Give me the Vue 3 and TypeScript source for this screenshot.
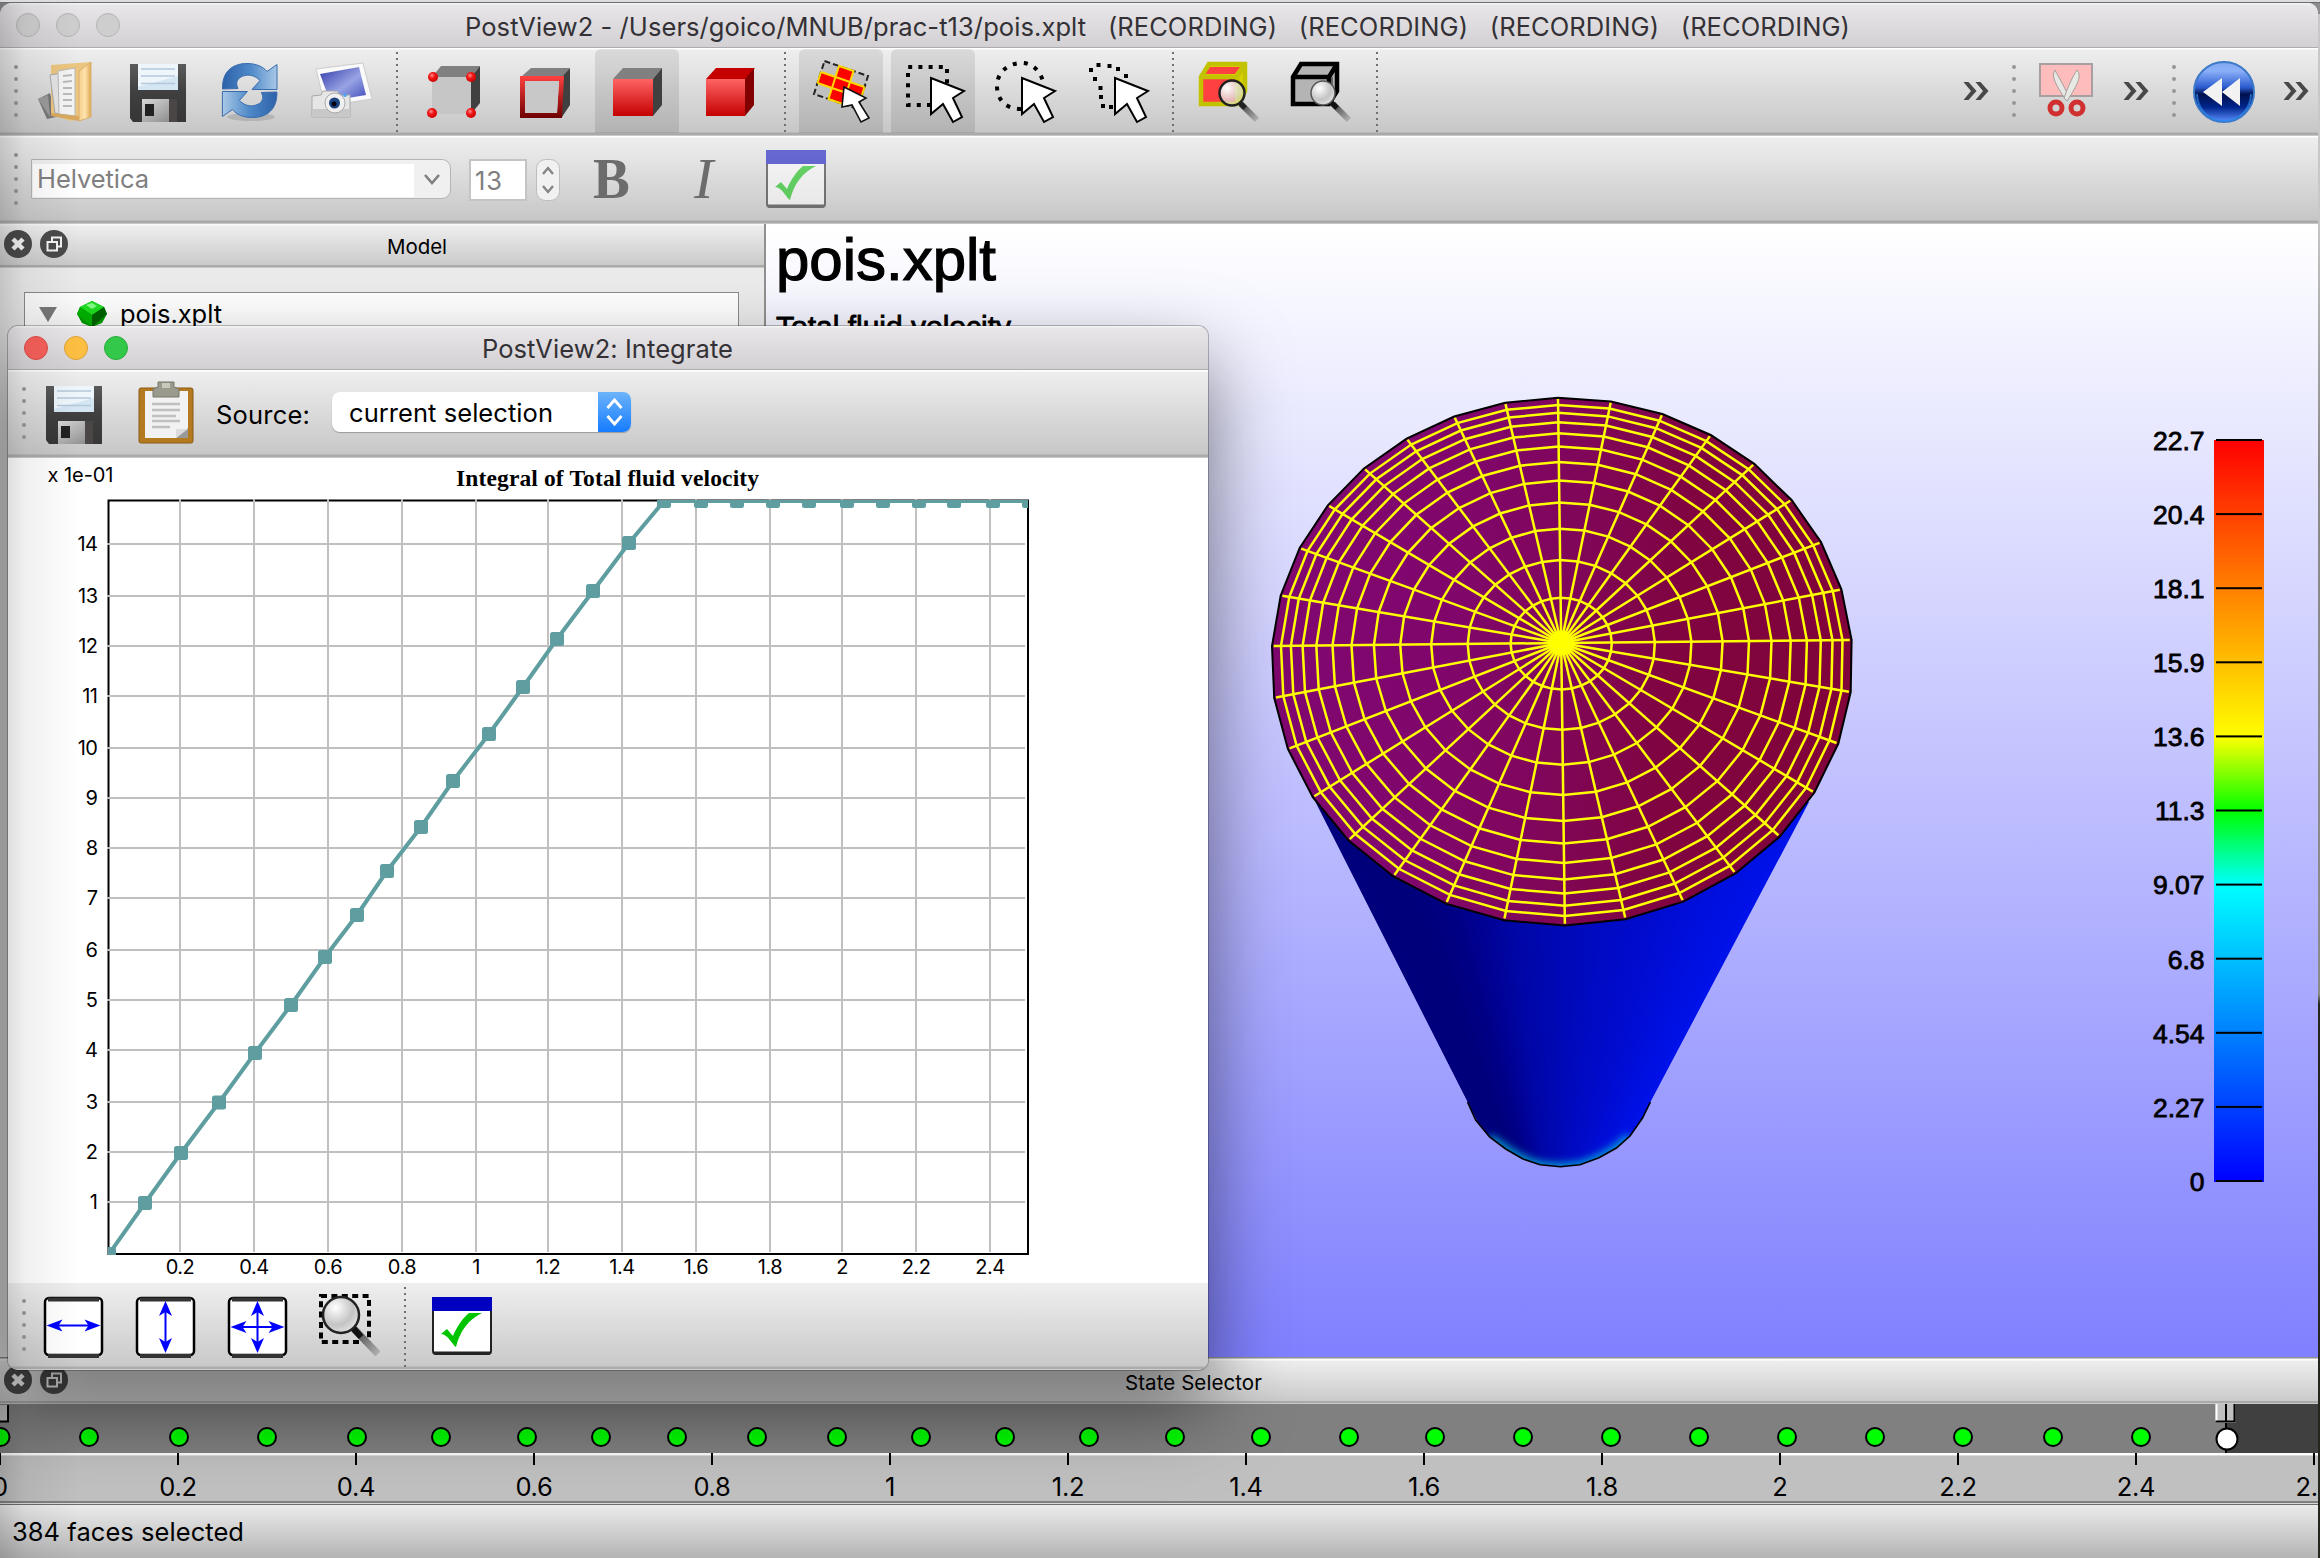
<script setup lang="ts">
type Pt = [number, number]

// Spreads or tightens the letters of an element until it has the given width
const vFit = {
  mounted(el: HTMLElement, binding: { value: number }) {
    const n = (el.textContent ?? '').length
    const w = el.getBoundingClientRect().width
    el.style.letterSpacing = `${((binding.value - w) / n).toFixed(3)}px`
  },
}

const nb = '\u00a0\u00a0 '
const title = 'PostView2 - /Users/goico/MNUB/prac-t13/pois.xplt' + (nb + '(RECORDING)').repeat(4)

// ---- chart ----
const gridX = [180, 254, 328, 402, 476, 548, 622, 696, 770, 842, 916, 990]
const gridY = [544, 596, 646, 696, 748, 798, 848, 898, 950, 1000, 1050, 1102, 1152, 1202]
const xLabels = ['0.2', '0.4', '0.6', '0.8', '1', '1.2', '1.4', '1.6', '1.8', '2', '2.2', '2.4']
const samples: Pt[] = [
  [109, 1254], [145, 1203], [181, 1153], [219, 1102.500], [255, 1053], [291, 1005], [325, 957], [357, 915],
  [387, 871], [421, 827], [453, 781], [489, 734], [523, 687], [557, 639], [593, 591], [629, 543],
  [664, 501], [701, 501], [737, 501], [773, 501], [809, 501], [847, 501], [883, 501], [919, 501],
  [954, 501], [993, 501], [1029, 501],
]
const curve = samples.map((p) => p.join(',')).join(' ')

// ---- disc mesh: 32 sectors, 12 rings, seen in perspective ----
const project = (r: number, k: number): Pt => {
  const a = (k * Math.PI) / 16
  const c = r * Math.cos(a)
  const s = r * Math.sin(a)
  const w = 1 - 0.002 * c + 0.0706 * s
  return [(1561.2 + 286.1 * c + 106.8 * s) / w, (643 - 4.3 * c - 216.7 * s) / w]
}
const ringOf = (r: number) =>
  Array.from({ length: 32 }, (_, k) => project(r, k).map((v) => v.toFixed(1)).join(',')).join(' ')
const radii = Array.from({ length: 11 }, (_, i) => (1 - 0.85 ** (i + 1)) / (1 - 0.85 ** 12))
const rings = radii.map(ringOf)
const rim = ringOf(1.002)
const spokes = Array.from({ length: 32 }, (_, k) => project(0.996, k))

// ---- pipe wall, shaded in slices that run to its vanishing point ----
const ramp: [number, number, number][] = [
  [0, 0, 124], [0.12, 0, 122], [0.22, 0, 134], [0.37, 6, 166], [0.57, 10, 190], [0.75, 12, 208], [1, 18, 234],
]
const slices = Array.from({ length: 90 }, (_, i) => {
  const t = i / 89
  let j = 1
  while (ramp[j][0] < t) j++
  const [a, b] = [ramp[j - 1], ramp[j]]
  const f = (t - a[0]) / (b[0] - a[0])
  const edge = (u: number): Pt[] => [
    [1315 + 494 * u - (152.5 - 311 * u) * 0.3, 713],
    [1467.5 + 183 * u + (152.5 - 311 * u) * 0.25, 1177],
  ]
  const l = edge(i / 90)
  const r = edge((i + 1.6) / 90)
  return {
    points: [l[0], r[0], r[1], l[1]].map((p) => p.join(',')).join(' '),
    fill: `rgb(0,${Math.round(a[1] + f * (b[1] - a[1]))},${Math.round(a[2] + f * (b[2] - a[2]))})`,
  }
})
const endArc =
  '1467.5,1102 1475.7,1120 1489.6,1137 1505.7,1149 1523,1159 1540,1164.7 1560.4,1166.7 1580,1164.7 1599,1157.7 1616.4,1148 1630,1136 1642.5,1118 1650.4,1102'

const legend = ['22.7', '20.4', '18.1', '15.9', '13.6', '11.3', '9.07', '6.8', '4.54', '2.27', '0']

// ---- time line ----
const states = [
  0.5, 89, 179, 267, 357, 441, 527, 601, 677, 757, 837, 921, 1005, 1089, 1175, 1261, 1349, 1435, 1523, 1611, 1699,
  1787, 1875, 1963, 2053, 2141,
]
const ticks = ['0', '0.2', '0.4', '0.6', '0.8', '1', '1.2', '1.4', '1.6', '1.8', '2', '2.2', '2.4', '2.6']

type Tool = { id: string; on?: boolean }
const tools: Tool[][] = [
  [{ id: 'open' }, { id: 'save' }, { id: 'refresh' }, { id: 'photo' }],
  [{ id: 'nodes' }, { id: 'edges' }, { id: 'faces', on: true }, { id: 'solid' }],
  [{ id: 'pick', on: true }, { id: 'rect', on: true }, { id: 'circle' }, { id: 'lasso' }],
  [{ id: 'zoomsel' }, { id: 'zoomall' }],
]
</script>

<template>
  <div class="screen">
    <svg class="defs" width="0" height="0">
      <defs>
        <linearGradient id="gRed" x1="0" y1="0" x2="0" y2="1"><stop offset="0" stop-color="#ff6464" /><stop offset="1" stop-color="#c40000" /></linearGradient>
        <linearGradient id="gFrame" x1="0" y1="0" x2="0" y2="1"><stop offset="0" stop-color="#ff4040" /><stop offset="1" stop-color="#6e0000" /></linearGradient>
        <linearGradient id="gBlue" x1="0" y1="0" x2="1" y2="0"><stop offset="0" stop-color="#2d62a8" /><stop offset=".5" stop-color="#4d88c8" /><stop offset="1" stop-color="#a8c8e6" /></linearGradient>
        <linearGradient id="gScreen" x1="0" y1="0" x2="1" y2="1"><stop offset="0" stop-color="#3038a8" /><stop offset=".55" stop-color="#98a4e4" /><stop offset="1" stop-color="#3c48b8" /></linearGradient>
        <linearGradient id="gMetal" x1="0" y1="0" x2="1" y2="1"><stop offset="0" stop-color="#d8d8d8" /><stop offset="1" stop-color="#858585" /></linearGradient>
        <linearGradient id="gFolder" x1="0" y1="0" x2="1" y2="0"><stop offset="0" stop-color="#f4cf8c" /><stop offset=".5" stop-color="#ffe2ac" /><stop offset="1" stop-color="#dba850" /></linearGradient>
        <linearGradient id="gBody" x1="0" y1="0" x2="0" y2="1"><stop offset="0" stop-color="#5a5a5a" /><stop offset=".5" stop-color="#3f3f3f" /><stop offset="1" stop-color="#383636" /></linearGradient>
        <linearGradient id="gHandle" x1="0" y1="0" x2="1" y2="1"><stop offset="0" stop-color="#333" /><stop offset=".4" stop-color="#707070" /><stop offset="1" stop-color="#b0b0b0" /></linearGradient>
        <radialGradient id="gLens" cx=".35" cy=".3" r=".8"><stop offset="0" stop-color="#fff" /><stop offset=".6" stop-color="#c4c4c4" /><stop offset="1" stop-color="#e8e8e8" /></radialGradient>
        <radialGradient id="gLensClear" cx=".3" cy=".3" r=".9"><stop offset="0" stop-color="#fff" /><stop offset=".6" stop-color="#ddd" stop-opacity=".75" /><stop offset="1" stop-color="#fff" stop-opacity=".15" /></radialGradient>
        <radialGradient id="gBall" cx=".4" cy=".35" r=".7"><stop offset="0" stop-color="#ff9090" /><stop offset=".4" stop-color="#f01818" /><stop offset="1" stop-color="#c00" /></radialGradient>
        <linearGradient id="gRew" x1="0" y1="0" x2="0" y2="1"><stop offset="0" stop-color="#7fa8f0" /><stop offset=".15" stop-color="#8ab0f8" /><stop offset=".42" stop-color="#2c5cd0" /><stop offset=".54" stop-color="#00104c" /><stop offset=".75" stop-color="#00248c" /><stop offset="1" stop-color="#5c90ff" /></linearGradient>
        <g id="floppy">
          <path d="M15 15h56v58H18l-3-4z" fill="url(#gBody)" />
          <path d="M23 15h40v26H23z" fill="#d4e6f2" /><path d="M23 15h40v12L23 38z" fill="#eef6fb" />
          <path d="M26 20h34M26 27h34M26 34.500h34" stroke="#b4c8dc" stroke-width="1.600" />
          <path d="M27 50h35v23H27z" fill="url(#gMetal)" /><path d="M54 50h8v23h-8z" fill="#4a4646" />
          <path d="M30 55h9v12h-9z" fill="#222" />
        </g>
        <path id="pointer" d="M40 29L73 42L62 49L71 68L62 73L52 55L40 65Z" fill="#fff" stroke="#000" stroke-width="2" stroke-linejoin="miter" />
        <path id="chevrons" d="M1.500 1h5l8 9-8 9h-5l7.500-9zM13.500 1h5l8 9-8 9h-5l7.500-9z" />
        <g id="check">
          <path d="M13 14h58v53a3 3 0 0 1-3 3H16a3 3 0 0 1-3-3z" fill="#fff" stroke="#222" stroke-width="2" />
          <path d="M12 13h60v14H12z" fill="#0000c0" />
          <path d="M14 69h56" stroke="#222" stroke-width="3" />
          <path d="M21 50l6-5 6 7c4-10 10-18 16-23h13c-14 7-22 18-26 34-3-1-8-13-15-13z" fill="#00c400" />
        </g>
        <g id="xbtn">
          <circle cx="14" cy="14" r="14" fill="#4a4a4a" /><path d="M9 9l10 10M19 9L9 19" stroke="#f4f4f4" stroke-width="4.500" />
        </g>
        <g id="floatbtn">
          <circle cx="14" cy="14" r="14" fill="#4a4a4a" /><path d="M12 11V7.500h9v9h-3M7.500 12h9.500v8.500H7.500z" fill="none" stroke="#f4f4f4" stroke-width="2" />
        </g>
      </defs>
    </svg>

    <div class="backdrop-line"></div>

    <div class="main">
      <header class="titlebar">
        <div class="lights off"><i></i><i></i><i></i></div>
        <span class="caption" v-fit="1385">{{ title }}</span>
      </header>

      <!-- main tool bar -->
      <div class="toolbar">
        <div class="grip"><i v-for="n in 5" :key="n"></i></div>
        <template v-for="(group, gi) in tools" :key="gi">
          <div v-for="tool in group" :key="tool.id" class="tool" :class="{ on: tool.on }">
            <svg viewBox="0 0 84 84" width="84" height="84">
              <g v-if="tool.id === 'open'">
                <path d="M15 50l12-6 6 24-9 2z" fill="#777" /><path d="M15 50l10-4 2 22z" fill="#9a9a9a" />
                <path d="M28 16l40-3v7l-12 4v46l-8 2-20-6z" fill="#ecc680" />
                <path d="M27 26l12-2 4 42-11-2z" fill="#e4e4e4" stroke="#aaa" />
                <path d="M35 22l17-3v48l-16-2z" fill="#f4f4f4" stroke="#b8b8b8" />
                <path d="M40 27l9-1M40 33l9-1M40 39h9M40 45h9M40 51h9M40 57h9" stroke="#bbb" stroke-width="2" />
                <path d="M56 22l12-9v55l-12 4z" fill="url(#gFolder)" stroke="#d8b070" />
                <path d="M28 64l28 3v5l-28-5z" fill="#d8aa60" />
              </g>
              <use v-else-if="tool.id === 'save'" href="#floppy" />
              <g v-else-if="tool.id === 'refresh'">
                <ellipse cx="44" cy="68" rx="24" ry="4" fill="#999" opacity=".5" />
                <path d="M15.500 40C15 22 26 14.500 40 14.500c9 0 16 3 20 8l10-7v25H45l8-9c-6-6-13-7-20-3-4 3-4 7-2 11z" fill="url(#gBlue)" stroke="#3a6cae" />
                <path d="M15.500 40C15 22 26 14.500 40 14.500c9 0 16 3 20 8l10-7v25H45l8-9c-6-6-13-7-20-3-4 3-4 7-2 11z" fill="url(#gBlue)" stroke="#3a6cae" transform="rotate(180 42.700 41.500)" />
              </g>
              <g v-else-if="tool.id === 'photo'">
                <path d="M17 20l47-6 9 36-47 7z" fill="#fafafa" stroke="#ccc" />
                <path d="M21 25l39-7 7 28-36 6z" fill="url(#gScreen)" />
                <path d="M13 47l9-1 2-4h14l3 4h10v22H13z" fill="#e6e6e6" stroke="#a8a8a8" />
                <path d="M13 60h38v8H13z" fill="#c8c8c8" />
                <circle cx="36" cy="54" r="10" fill="#f0f0f0" stroke="#aaa" /><circle cx="35.500" cy="54" r="5.500" fill="#1c4480" /><circle cx="35" cy="55" r="2.500" fill="#001" />
                <circle cx="46" cy="46" r="2" fill="#58a0f0" />
              </g>
              <g v-else-if="tool.id === 'nodes'">
                <path d="M21 28h39v37H21z" fill="#c6c6c6" /><path d="M21 28l9-11h39l-9 11z" fill="#808080" /><path d="M60 28l9-11v37l-9 11z" fill="#404040" />
                <circle v-for="p in [[22, 28], [60, 28], [21, 64], [60, 64]]" :key="p.join()" :cx="p[0]" :cy="p[1]" r="5" fill="url(#gBall)" />
              </g>
              <g v-else-if="tool.id === 'edges'">
                <path d="M18 28l10-9h39l-7 9z" fill="#808080" /><path d="M59 28l8-9v37l-8 12z" fill="#404040" />
                <path d="M17 27h44l-2 42H17zM22 32v32h32l2-32z" fill="url(#gFrame)" fill-rule="evenodd" /><path d="M22 32h34l-2 32H22z" fill="#c8c8c8" />
              </g>
              <g v-else-if="tool.id === 'faces'">
                <path d="M18 30l10-11h39l-9 11z" fill="#808080" /><path d="M58 30l9-11v37l-9 11z" fill="#404040" /><path d="M18 30h40v37H18z" fill="url(#gRed)" />
              </g>
              <g v-else-if="tool.id === 'solid'">
                <path d="M19 30l10-11h39l-9 11z" fill="#c40000" /><path d="M58 30l9-11v37l-9 11z" fill="#820000" /><path d="M19 30h39v37H19z" fill="url(#gRed)" />
              </g>
              <g v-else-if="tool.id === 'pick'">
                <g transform="matrix(14.5 5 -3.5 11 25.5 12)">
                  <path d="M0 0h3v3h-3z" fill="#c0c0c0" />
                  <path d="M1 0h1v1h1v1h-1v1h-1v-1h-1v-1h1z" fill="#f00" />
                </g>
                <path d="M25.500 12L69 27L58.500 60L15 45Z" fill="none" stroke="#222" stroke-width="2" stroke-dasharray="6 3" />
                <path d="M40 17L54.500 22L44 55L29.500 50ZM22 23L65.500 38M18.500 34L62 49M22 23l-3.500 11M65.500 38L62 49" fill="none" stroke="#ffd800" stroke-width="2" />
                <path d="M45 38L67 49L60 53L70 69L62 73L53 56L43 58Z" fill="#fff" stroke="#111" stroke-width="1.600" />
              </g>
              <g v-else-if="tool.id === 'rect'">
                <path d="M40 56H17V18h39v18" fill="none" stroke="#000" stroke-width="4" stroke-dasharray="4 6.200" /><use href="#pointer" />
              </g>
              <g v-else-if="tool.id === 'circle'">
                <path d="M38 60C22 60 14 50 14 37S24 15 37 14s22 10 23 20" fill="none" stroke="#000" stroke-width="4" stroke-dasharray="4 7" /><use href="#pointer" x="-1" />
              </g>
              <g v-else-if="tool.id === 'lasso'">
                <path v-for="p in [[16, 21], [23.5, 16], [34.5, 17], [43, 20], [51, 27], [20, 30], [25.5, 39], [26, 48], [28, 57], [36, 58]]" :key="p.join()" :d="`M${p[0] - 2} ${p[1] - 2}h4v4h-4z`" />
                <use href="#pointer" />
              </g>
              <g v-else-if="tool.id === 'zoomsel'">
                <path d="M14 28l8-13h36v27l-8 13H14z" fill="#d8d000" /><path d="M23 18h30l-5 7H18z" fill="#ff4040" />
                <path d="M14 28h36v27H14z" fill="#ff4040" /><path d="M14 28l8-13h36v27l-8 13H14zM14 28h36v27M50 28l8-13" fill="none" stroke="#c2c200" stroke-width="4.500" />
                <path d="M54 55L70 71" stroke="url(#gHandle)" stroke-width="6" /><path d="M53 54l5 5" stroke="#222" stroke-width="5" />
                <circle cx="45" cy="44" r="12.500" fill="url(#gLensClear)" stroke="#222" stroke-width="2.500" />
              </g>
              <g v-else-if="tool.id === 'zoomall'">
                <path d="M14 28l8-13h36v27l-8 13H14zM14 28h36v27M50 28l8-13" fill="#b4b4b4" stroke="#000" stroke-width="4.500" /><path d="M53 28v18" stroke="#666" stroke-width="2" />
                <path d="M54 55L70 71" stroke="url(#gHandle)" stroke-width="6" /><path d="M52 53l6 6" stroke="#111" stroke-width="5" />
                <circle cx="44" cy="44" r="12" fill="url(#gLens)" stroke="#555" stroke-width="1.500" />
              </g>
            </svg>
          </div>
          <div class="sep"></div>
        </template>
        <div class="spacer"></div>
        <svg class="more" viewBox="0 0 28 20" width="28" height="20"><use href="#chevrons" /></svg>
        <div class="grip right"><i v-for="n in 5" :key="n"></i></div>
        <svg class="cut" viewBox="0 0 60 60" width="60" height="60">
          <path d="M4 4h52v32H4z" fill="#ffbcbc" stroke="#a8a0a0" stroke-width="2" />
          <circle cx="20" cy="48" r="6" fill="none" stroke="#d03030" stroke-width="5" /><circle cx="41" cy="48" r="6" fill="none" stroke="#d03030" stroke-width="5" />
          <path d="M19 10c-4 6 0 14 11 30l3-3C27 24 22 16 19 10z" fill="#e8e8e4" stroke="#a0a09a" /><path d="M41 10c5 6 1 14-10 31l-3-3c5-14 9-22 13-28z" fill="#e8e8e4" stroke="#a0a09a" />
        </svg>
        <svg class="more m2" viewBox="0 0 28 20" width="28" height="20"><use href="#chevrons" /></svg>
        <div class="grip right"><i v-for="n in 5" :key="n"></i></div>
        <svg class="rewind" viewBox="0 0 64 64" width="64" height="64">
          <circle cx="32" cy="32" r="30" fill="url(#gRew)" stroke="#3c78c8" stroke-width="2" />
          <path d="M5 34a27 27 0 0 0 54 0" fill="none" stroke="#2c88e8" stroke-width="2" opacity=".7" />
          <path d="M11 32l19-14v28zM30 32l18-14v28z" fill="#f2f2f2" />
        </svg>
        <svg class="more m3" viewBox="0 0 28 20" width="28" height="20"><use href="#chevrons" /></svg>
      </div>

      <!-- font tool bar -->
      <div class="toolbar fonts">
        <div class="grip"><i v-for="n in 5" :key="n"></i></div>
        <div class="combo">
          <div class="field"><span v-fit="112">Helvetica</span></div>
          <svg viewBox="0 0 36 38" width="36" height="38"><path d="M11 15l7 8 7-8" fill="none" stroke="#808080" stroke-width="2.600" /></svg>
        </div>
        <div class="size"><span v-fit="28">13</span></div>
        <svg class="stepper" viewBox="0 0 24 42" width="24" height="42">
          <rect x=".5" y=".5" width="23" height="41" rx="9" fill="#f1f1f1" stroke="#bdbdbd" /><path d="M7 15l5-6 5 6M7 27l5 6 5-6" fill="none" stroke="#858585" stroke-width="2.400" />
        </svg>
        <span class="bold">B</span>
        <span class="ital">I</span>
        <svg class="faded" viewBox="0 0 84 84" width="84" height="84"><use href="#check" /></svg>
      </div>

      <div class="body">
        <aside class="dock">
          <div class="dock-head">
            <svg width="28" height="28" viewBox="0 0 28 28"><use href="#xbtn" /></svg>
            <svg width="28" height="28" viewBox="0 0 28 28"><use href="#floatbtn" /></svg>
            <span v-fit="60">Model</span>
          </div>
          <div class="tree">
            <svg class="fold" width="18" height="15" viewBox="0 0 18 15"><path d="M0 0h18L9 15z" fill="#7c7c7c" /></svg>
            <svg width="30" height="26" viewBox="0 0 30 26">
              <path d="M15 0l12 6 3 7-5 9-10 4-10-4-5-9 3-7z" fill="#009a00" /><path d="M15 0l12 6-12 8L3 6z" fill="#20e020" /><path d="M15 14L27 6l3 7-15 13z" fill="#006400" /><path d="M3 6l12 8v12L0 13z" fill="#00b400" /><path d="M9 4l6-2 5 3-5 3z" fill="#8f8" />
            </svg>
            <span v-fit="102">pois.xplt</span>
          </div>
        </aside>

        <section class="view">
          <svg viewBox="766 224 1552 1133" width="1552" height="1133">
            <defs>
              <linearGradient id="disc" gradientUnits="userSpaceOnUse" x1="1272" y1="620" x2="1851" y2="680">
                <stop offset="0" stop-color="#800870" /><stop offset=".3" stop-color="#80066c" /><stop offset=".5" stop-color="#80065a" /><stop offset=".7" stop-color="#800440" /><stop offset="1" stop-color="#80033a" />
              </linearGradient>
              <linearGradient id="bar" x1="0" y1="0" x2="0" y2="1">
                <stop offset="0" stop-color="#f00" /><stop offset=".4" stop-color="#ff0" /><stop offset=".5" stop-color="#0f0" /><stop offset=".6" stop-color="#0ff" /><stop offset="1" stop-color="#00f" />
              </linearGradient>
              <clipPath id="pipe"><polygon :points="`1360,780 1315.5,802 ${endArc} 1809,802 1760,780`" /></clipPath>
              <filter id="soft" x="-10%" y="-30%" width="120%" height="160%"><feGaussianBlur stdDeviation="4" /></filter>
            </defs>
            <text class="helv" x="776" y="280" font-size="60" textLength="220" stroke-width="1.200">pois.xplt</text>
            <text class="helv" x="776" y="336.500" font-size="30" textLength="235" stroke-width=".8">Total fluid velocity</text>
            <g clip-path="url(#pipe)">
              <polygon v-for="(s, i) in slices" :key="i" :points="s.points" :fill="s.fill" />
              <polyline points="1489,1138 1506,1150 1523,1160 1540,1166 1560,1168 1580,1166 1599,1159 1616,1149 1630,1137" fill="none" stroke="#00b4d8" stroke-width="8" filter="url(#soft)" />
            </g>
            <polyline :points="endArc" fill="none" stroke="#000" stroke-width="1.600" />
            <polygon :points="rim" fill="url(#disc)" stroke="#000" stroke-width="2" />
            <g fill="none" stroke="#ff0" stroke-width="2.500">
              <polygon v-for="(r, i) in rings" :key="i" :points="r" />
              <line v-for="(p, i) in spokes" :key="'s' + i" x1="1561.200" y1="643" :x2="p[0]" :y2="p[1]" />
            </g>
            <circle cx="1561.200" cy="643" r="12.500" fill="#ff0" />
            <rect x="2214" y="440" width="50" height="742" fill="url(#bar)" />
            <g v-for="(l, i) in legend" :key="l">
              <rect x="2216" :y="439 + i * 74.1" width="46" height="2" />
              <text class="helv" x="2204.500" :y="449.5 + i * 74.15" font-size="26.500" text-anchor="end" stroke-width=".8">{{ l }}</text>
            </g>
          </svg>
        </section>
      </div>

      <div class="state-head">
        <svg width="28" height="28" viewBox="0 0 28 28"><use href="#xbtn" /></svg>
        <svg width="28" height="28" viewBox="0 0 28 28"><use href="#floatbtn" /></svg>
        <span v-fit="137">State Selector</span>
      </div>
      <svg class="timeline" viewBox="0 1404 2318 101" width="2318" height="101">
        <rect y="1404" width="2318" height="49" fill="#808080" />
        <rect x="2226" y="1404" width="92" height="49" fill="#404040" />
        <rect y="1453" width="2318" height="2.500" fill="#fff" />
        <rect y="1455.500" width="2318" height="46" fill="#c0c0c0" />
        <rect y="1501" width="2318" height="2" fill="#808080" /><rect y="1503" width="2318" height="1" fill="#d8d8d8" /><rect y="1504" width="2318" height="1" fill="#6c6c6c" />
        <rect x="0" y="1405" width="8" height="17" fill="#c0c0c0" /><path d="M0 1421.500H8V1405" fill="none" stroke="#000" stroke-width="2" />
        <path d="M2226 1404v49" stroke="#000" stroke-width="2" />
        <rect x="2215.500" y="1404" width="20" height="19" fill="#c0c0c0" /><path d="M2216.500 1422V1404" stroke="#fff" stroke-width="2" /><path d="M2215.500 1421.500H2234.500V1404M2226 1404v17" fill="none" stroke="#000" stroke-width="2" />
        <circle v-for="x in states" :key="x" :cx="x" cy="1437" r="9" fill="#0f0" stroke="#000" stroke-width="2" />
        <circle cx="2227" cy="1439" r="10.500" fill="#fff" stroke="#000" stroke-width="2" />
        <g v-for="(t, i) in ticks" :key="t">
          <rect :x="i * 178 - 1" y="1453" width="2" height="12" />
          <text class="ui" :x="i * 178" y="1495.500" text-anchor="middle" font-size="25.500" letter-spacing="-.3">{{ t }}</text>
        </g>
      </svg>
      <footer class="status"><span v-fit="232">384 faces selected</span></footer>
    </div>

    <div class="backdrop-edge"></div>

    <!-- Integrate window -->
    <div class="dialog">
      <header class="titlebar">
        <div class="lights"><i class="r"></i><i class="y"></i><i class="g"></i></div>
        <span class="caption" v-fit="251">PostView2: Integrate</span>
      </header>
      <div class="toolbar">
        <div class="grip"><i v-for="n in 5" :key="n"></i></div>
        <div class="tool"><svg viewBox="0 0 84 84" width="84" height="84"><use href="#floppy" /></svg></div>
        <div class="tool">
          <svg viewBox="0 0 84 84" width="84" height="84">
            <rect x="16" y="17" width="54" height="55" rx="2" fill="#b47a20" stroke="#8a5a14" /><path d="M22 20h43v47H22z" fill="#f2f2f2" />
            <path d="M29 33h28M29 39h28M29 45h24M29 50h28M29 56h18" stroke="#c0c0c0" stroke-width="2.400" />
            <path d="M65 57L53 67h12z" fill="#999" /><path d="M53 67v-9h12z" fill="#dcdcdc" />
            <path d="M30 26v-8l5-2v-5h16v5l5 2v8z" fill="#9a9a8c" stroke="#77776c" /><path d="M39 12h8v5h-8z" fill="#c8c8bc" />
          </svg>
        </div>
        <span class="source" v-fit="94">Source:</span>
        <div class="select">
          <span v-fit="204">current selection</span>
          <svg viewBox="0 0 33 40" width="33" height="40"><path d="M9.500 16l7-8 7 8M9.500 24l7 8 7-8" fill="none" stroke="#fff" stroke-width="2.800" /></svg>
        </div>
      </div>
      <svg class="chart" viewBox="8 458 1200 825" width="1200" height="825">
        <defs><clipPath id="plot"><rect x="108" y="500" width="920" height="755" /></clipPath></defs>
        <rect x="8" y="458" width="1200" height="825" fill="#fff" />
        <text class="ui" x="47.500" y="482" font-size="20" textLength="66">x 1e-01</text>
        <text class="times" x="456" y="486" font-size="23.500" textLength="303">Integral of Total fluid velocity</text>
        <rect x="108.500" y="500.500" width="919.500" height="753.500" fill="none" stroke="#000" stroke-width="2" />
        <g fill="#c0c0c0">
          <rect v-for="x in gridX" :key="x" :x="x - 1" y="499" width="2" height="753" />
          <rect v-for="y in gridY" :key="y" x="107" :y="y - 1" width="918" height="2" />
        </g>
        <g clip-path="url(#plot)">
          <polyline :points="curve" fill="none" stroke="#5f9ea0" stroke-width="4" />
          <rect v-for="(p, i) in samples" :key="i" :x="p[0] - 7" :y="p[1] - 7" width="14" height="14" rx="2.500" fill="#5f9ea0" />
        </g>
        <text v-for="(l, i) in xLabels" :key="l" class="ui" :x="gridX[i]" y="1274" font-size="20" text-anchor="middle" letter-spacing="-.5">{{ l }}</text>
        <text v-for="(y, i) in gridY" :key="'y' + y" class="ui" x="97.500" :y="y + 7" font-size="20" text-anchor="end" letter-spacing="-.5">{{ 14 - i }}</text>
      </svg>
      <div class="toolbar bottom">
        <div class="grip"><i v-for="n in 5" :key="n"></i></div>
        <div v-for="k in ['h', 'v', 'hv']" :key="k" class="tool">
          <svg viewBox="0 0 84 84" width="84" height="84">
            <rect x="14" y="14" width="57" height="57" rx="4" fill="#fff" stroke="#000" stroke-width="2.500" /><path d="M17 15.500h51M17 72h51" stroke="#333" stroke-width="4" />
            <g fill="#00f" stroke="#00f" stroke-width="2">
              <g v-if="k !== 'v'" :transform="k === 'hv' ? 'translate(0 1.5)' : ''"><path d="M22 41.500h40" /><path d="M15.500 41.500l16-6-4 6 4 6zM69.500 41.500l-16-6 4 6-4 6z" stroke="none" /></g>
              <g v-if="k !== 'h'"><path d="M42.500 22v42" /><path d="M42.500 17l-6.500 15 6.500-4 6.500 4zM42.500 69l-6.500-15 6.500 4 6.500-4z" stroke="none" /></g>
            </g>
          </svg>
        </div>
        <div class="tool">
          <svg viewBox="0 0 84 84" width="84" height="84">
            <path d="M14 12h48v46H14z" fill="none" stroke="#000" stroke-width="4" stroke-dasharray="6 4.400" />
            <path d="M47 45L71 70" stroke="url(#gHandle)" stroke-width="7" /><path d="M46 44l8 9" stroke="#111" stroke-width="6" />
            <circle cx="34" cy="31" r="18" fill="url(#gLens)" stroke="#222" stroke-width="2.500" />
          </svg>
        </div>
        <div class="sep"></div>
        <div class="tool"><svg viewBox="0 0 84 84" width="84" height="84"><use href="#check" /></svg></div>
      </div>
    </div>

    <div class="edge-shade"></div>
  </div>
</template>

<style>
body {
  margin: 0;
  overflow: hidden;
}
</style>

<style scoped>
.screen {
  position: relative;
  width: 2320px;
  height: 1558px;
  overflow: hidden;
  background: #8c8c8c;
  font-family: Inter, Roboto, 'Liberation Sans', sans-serif;
  font-size: 25.5px;
  color: #000;
  display: flex;
  flex-direction: column;
}
.defs {
  position: absolute;
}
svg {
  display: block;
  flex: none;
}
span {
  white-space: pre;
}
.ui {
  font-family: Inter, Roboto, sans-serif;
}
.helv {
  font-family: 'Liberation Sans', Arial, sans-serif;
  fill: #000;
  stroke: #000;
}
.times {
  font-family: 'Liberation Serif', serif;
  font-weight: bold;
}
.backdrop-line {
  height: 3px;
  background: linear-gradient(#dcdcde 0 2px, #6c6c70 2px);
}
.backdrop-edge {
  position: absolute;
  right: 0;
  top: 14px;
  width: 2px;
  bottom: 0;
  background: linear-gradient(#c8c8c8 0 200px, #8a8a8a 450px 980px, #26261e 990px);
}
.main {
  width: 2318px;
  height: 1555px;
  display: flex;
  flex-direction: column;
  border-radius: 12px 10px 0 0;
  overflow: hidden;
  background: #ececec;
}
.titlebar {
  box-sizing: border-box;
  height: 45px;
  flex: none;
  display: flex;
  align-items: center;
  background: linear-gradient(#f4f3f4 0 1px, #e8e6e9 2px, #d2d0d3);
  border-bottom: 1px solid #aeacae;
}
.main > .titlebar .caption {
  margin-left: 345px;
  margin-top: 3px;
}
.caption {
  color: #333135;
}
.lights {
  display: flex;
  gap: 16px;
  margin-left: 16px;
}
.lights i {
  width: 22px;
  height: 22px;
  border-radius: 50%;
  border: 1px solid #b4b3b4;
  background: #cfcecf;
}
.lights .r {
  background: #f7605b;
  border-color: #e04a46;
}
.lights .y {
  background: #fdbf42;
  border-color: #dfa032;
}
.lights .g {
  background: #34c84a;
  border-color: #28ac38;
}
.toolbar {
  box-sizing: border-box;
  height: 88px;
  flex: none;
  display: flex;
  align-items: center;
  background: linear-gradient(#fff 0 1px, #eeeeee 2px, #c7c7c7 84px, #aaa 85px 87px, #c8c8c8 87px);
}
.grip {
  width: 4px;
  margin: 0 5px 3px 14px;
  display: flex;
  flex-direction: column;
  gap: 8px;
}
.grip i {
  width: 4px;
  height: 4px;
  border-radius: 50%;
  background: #969696;
}
.tool {
  width: 84px;
  height: 84px;
  margin-right: 8px;
  margin-top: -2px;
}
.tool.on {
  border-radius: 6px 6px 0 0;
  background: linear-gradient(rgba(0, 0, 0, 0.09), rgba(0, 0, 0, 0.1));
}
.sep {
  width: 2px;
  height: 80px;
  margin: 0 13px 0 5px;
  background: repeating-linear-gradient(#707070 0 2px, transparent 2px 6px);
}
.bottom .sep {
  margin-right: 14px;
}
.spacer {
  flex: 1;
}
.more {
  fill: #484848;
  margin-right: 22px;
  margin-top: -2px;
}
.toolbar .grip.right {
  margin: 0 0 3px 0;
}
.cut {
  margin: -4px 0 0 20px;
}
.m2 {
  margin-left: 26px;
}
.rewind {
  margin-left: 16px;
}
.m3 {
  margin-left: 26px;
  margin-right: 8px;
}
.combo {
  box-sizing: border-box;
  width: 420px;
  height: 40px;
  margin-left: 8px;
  margin-top: -3px;
  display: flex;
  border: 1px solid #b4b4b4;
  border-radius: 0 9px 9px 0;
  background: #f0f0f0;
  color: #808080;
}
.field {
  flex: 1;
  margin: 4px 0 1px 1px;
  padding-left: 4px;
  line-height: 30px;
  background: #fff;
}
.size {
  box-sizing: border-box;
  width: 58px;
  height: 42px;
  margin: 0 9px 0 18px;
  padding-left: 4px;
  line-height: 39px;
  border: 2px solid #c4c4c4;
  background: #fff;
  color: #808080;
}
.stepper {
  margin-top: 0;
}
.bold,
.ital {
  font-family: 'Liberation Serif', serif;
  font-size: 58px;
  line-height: 60px;
  color: #6c6c6c;
  width: 40px;
  margin-left: 32px;
  margin-top: -2px;
}
.bold {
  font-weight: bold;
  transform: scaleX(0.95);
}
.ital {
  font-style: italic;
  margin-left: 62px;
}
.faded {
  opacity: 0.55;
  margin-left: 20px;
  margin-top: -2px;
}
.body {
  display: flex;
  height: 1133px;
  flex: none;
}
.dock {
  box-sizing: border-box;
  width: 766px;
  border-right: 2px solid #909090;
  background: #ebebeb;
}
.dock-head,
.state-head {
  box-sizing: border-box;
  height: 44px;
  display: flex;
  align-items: center;
  gap: 8px;
  padding-left: 4px;
  font-size: 20.5px;
  background: linear-gradient(#f8f8f8 0 1px, #eee 2px, #cacaca 41px, #aaa 41px 43px, #c8c8c8 43px);
}
.dock-head svg,
.state-head svg {
  margin-top: -4px;
}
.dock-head span {
  margin-left: 311px;
  margin-top: 1px;
}
.tree {
  box-sizing: border-box;
  width: 715px;
  height: 400px;
  margin: 24px 0 0 24px;
  padding: 8px 0 0 14px;
  display: flex;
  align-items: flex-start;
  border: 1px solid #8c8c8c;
  background: #fff;
}
.fold {
  margin: 6px 20px 0 0;
}
.tree span {
  margin: -3px 0 0 13px;
}
.view {
  width: 1552px;
  background: linear-gradient(#fff, #8080ff);
}
.state-head {
  flex: none;
  height: 47px;
  padding-top: 3px;
  background: linear-gradient(#909090 0 1px, #fff 2px 3px, #eee 4px, #cacaca 44px, #aaa 44px 46px, #c8c8c8 46px);
}
.state-head span {
  margin-left: 1049px;
  margin-top: 1px;
}
.status {
  height: 53px;
  flex: none;
  display: flex;
  align-items: center;
  padding-left: 12px;
  background: linear-gradient(#ebebeb, #b4b4b4);
}
.dialog {
  position: absolute;
  left: 8px;
  top: 326px;
  width: 1200px;
  height: 1044px;
  display: flex;
  flex-direction: column;
  border-radius: 10px;
  background: #ddd;
  box-shadow: 0 0 0 1px rgba(0, 0, 0, 0.25), 0 36px 80px rgba(0, 0, 0, 0.52);
}
.dialog > .titlebar {
  height: 44px;
  border-radius: 10px 10px 0 0;
}
.dialog .caption {
  margin-left: 354px;
  margin-top: 1px;
}
.source {
  margin: 0 0 0 1px;
}
.select {
  display: flex;
  align-items: center;
  width: 299px;
  height: 40px;
  margin: -4px 0 0 22px;
  border-radius: 8px;
  overflow: hidden;
  background: #fff;
  box-shadow: 0 1px 1px #999;
}
.select span {
  margin-left: 17px;
}
.select svg {
  margin-left: auto;
  background: linear-gradient(#6cb3fa, #167cff);
}
.bottom {
  height: 87px;
  border-radius: 0 0 10px 10px;
  background: linear-gradient(#efefef, #c9c9c9 83px, #acacac 84px 86px, #d0d0d0 86px);
}
.edge-shade {
  position: absolute;
  left: 0;
  top: 3px;
  bottom: 0;
  width: 80px;
  background: linear-gradient(90deg, rgba(0, 0, 0, 0.16), rgba(0, 0, 0, 0.06) 25px, transparent);
}
</style>
